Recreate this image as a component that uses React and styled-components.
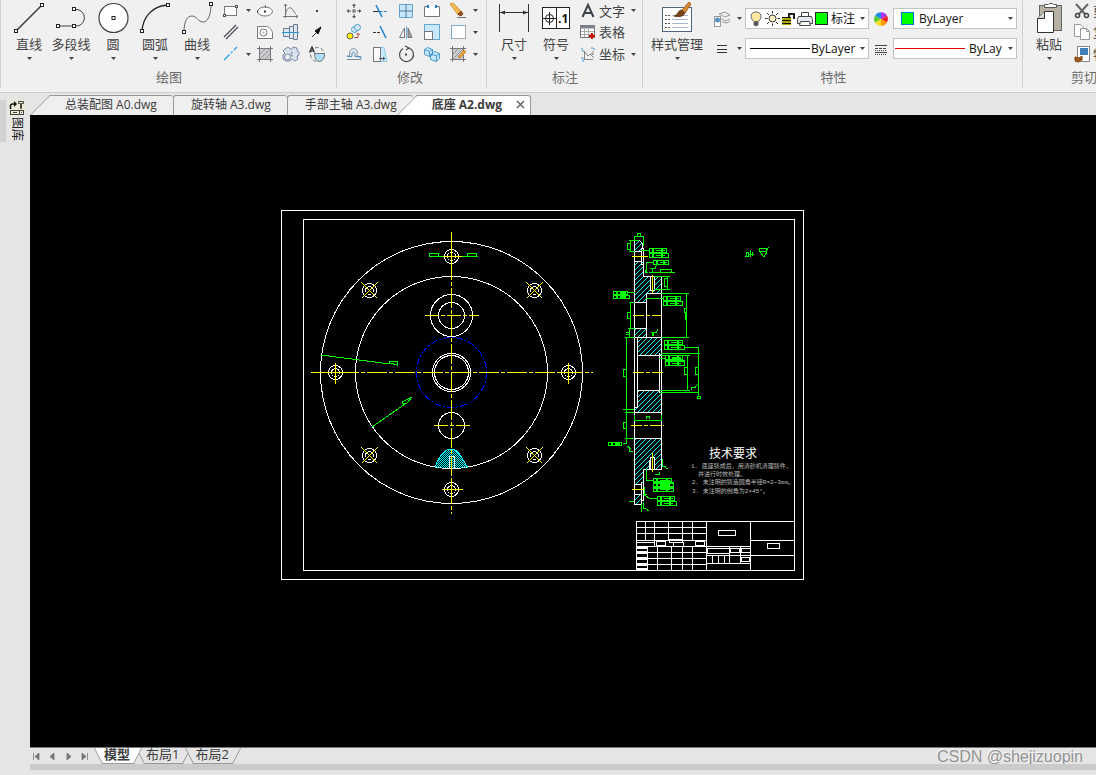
import React, { useState } from 'react';
import styled, { createGlobalStyle, css } from 'styled-components';

const GlobalStyle = createGlobalStyle`
  *,
  *::before,
  *::after {
    box-sizing: border-box;
  }

  body {
    margin: 0;
    overflow: hidden;
    font-family: 'Open Sans', 'Noto Sans CJK SC', sans-serif;
    font-size: 13px;
    color: #444;
  }

  button,
  select {
    font: inherit;
    color: inherit;
    margin: 0;
    padding: 0;
    border: none;
    background: none;
  }

  svg {
    display: block;
    flex: none;
  }
`;

const Window = styled.div`
  display: flex;
  flex-direction: column;
  height: 100vh;
  background-color: #e5e5e5;
`;

const Ribbon = styled.header`
  display: flex;
  flex: none;
  overflow: hidden;
  background-color: #f0f0f0;
  border-bottom: 1px solid #cdcdcd;
  padding-bottom: 4px;
`;

const Group = styled.section`
  display: flex;
  flex: none;
  flex-direction: column;
  border-left: 1px solid #d0d0d0;
  padding: ${({ $padding }) => $padding};
`;

const GroupBody = styled.div`
  display: flex;
  height: 69px;
`;

const GroupTitle = styled.h2`
  margin: 0;
  padding-bottom: 2px;
  font-size: 13px;
  font-weight: normal;
  line-height: 17px;
  text-align: center;
  color: #6c6c6c;
`;

const BigButton = styled.button`
  display: flex;
  flex-direction: column;
  align-items: center;
  width: ${({ $wide }) => ($wide ? 54 : 42)}px;
  padding-top: 1px;
  line-height: 18px;
  white-space: nowrap;
`;

const CaretBox = styled.span`
  display: flex;
  align-items: center;
  justify-content: center;
  width: 8px;
  height: 10px;
`;

const IconGrid = styled.div`
  display: grid;
  grid-template-columns: ${({ $columns }) => $columns};
  grid-template-rows: 21px 22px 22px;
  align-content: start;
`;

const IconButton = styled.button`
  display: flex;
  align-items: center;
  justify-content: center;
`;

const RowList = styled.div`
  display: grid;
  grid-template-rows: 21px 22px 22px;
  align-content: start;
`;

const RowButton = styled.button`
  display: grid;
  grid-template-columns: ${({ $icon }) => $icon}px auto 8px;
  align-items: center;
  line-height: 18px;
  white-space: nowrap;
  text-align: left;

  svg {
    justify-self: center;
  }
`;

const RowLabel = styled.span`
  padding-right: ${({ $gap }) => $gap}px;
`;

const Properties = styled.div`
  display: grid;
  grid-template-columns: 32px 124px 24px 124px;
  grid-template-rows: 21px 21px;
  row-gap: 9px;
  align-content: start;
  padding: 8px 0 0 9px;
`;

const MenuButton = styled.button`
  display: flex;
  align-items: center;
  gap: 4px;
`;

const Combo = styled.div`
  display: flex;
  align-items: center;
  gap: ${({ $gap }) => $gap}px;
  padding: 0 2px 0 ${({ $left }) => $left}px;
  border: 1px solid #c3c3c3;
  background-color: #fff;
`;

const ComboSelect = styled.select`
  appearance: none;
  flex: 1;
  min-width: 0;
  height: 19px;
  outline: none;
  font-size: 12px;
  line-height: 19px;
  color: #111;
`;

const Swatch = styled.span`
  flex: none;
  width: 13px;
  height: 13px;
  border: 1px solid ${({ $edge }) => $edge};
  background-color: #0f0;
`;

const LineSample = styled.span`
  flex: none;
  width: ${({ $width }) => $width}px;
  height: 1px;
  background-color: ${({ $color }) => $color};
`;

const LayerIcons = styled.span`
  display: flex;
  flex: none;
  align-items: center;
  gap: 2px;
`;

const Workspace = styled.div`
  display: flex;
  flex: 1;
  min-height: 0;
`;

const Sidebar = styled.aside`
  display: flex;
  flex: none;
  width: 30px;
  padding-top: 7px;
  align-items: flex-start;
`;

const LibraryTab = styled.button`
  display: flex;
  flex-direction: column;
  align-items: center;
  gap: 1px;
  width: 25px;
  height: 42px;
  border-left: 6px solid #d2d2d2;
  padding-left: 3px;
`;

const LibraryLabel = styled.span`
  writing-mode: vertical-rl;
  text-orientation: sideways;
  font-size: 12px;
  line-height: 14px;
  color: #222;
`;

const Main = styled.main`
  display: flex;
  flex: 1;
  min-width: 0;
  flex-direction: column;
`;

const FileTabs = styled.nav`
  display: flex;
  flex: none;
  align-items: flex-end;
  height: 22px;
`;

const slanted = css`
  padding-left: 35px;
  border-color: transparent;
  border-left: none;
  background: none;

  &::before {
    content: '';
    position: absolute;
    z-index: -1;
    left: 10px;
    top: -1px;
    width: 40px;
    height: 20px;
    border-left: 1px solid #999;
    border-top: 1px solid #999;
    background-color: ${({ $active }) => ($active ? '#fff' : '#efefef')};
    transform: skewX(-45deg);
  }

  &::after {
    content: '';
    position: absolute;
    z-index: -1;
    inset: -1px 0 0 30px;
    border-top: 1px solid #999;
    border-right: ${({ $active }) => ($active ? '1px solid #999' : 'none')};
    background-color: ${({ $active }) => ($active ? '#fff' : '#efefef')};
    border-top-right-radius: 3px;
  }
`;

const FileTab = styled.button`
  position: relative;
  z-index: 0;
  height: 20px;
  padding: 0 16px 2px 17px;
  line-height: 17px;
  white-space: nowrap;
  font-size: 12px;
  color: #3c3c3c;
  border-top: 1px solid #999;
  border-left: 1px solid #999;
  border-top-left-radius: 3px;
  border-top-right-radius: 3px;
  background-color: #efefef;

  ${({ $slanted }) => $slanted && slanted}

  ${({ $active }) =>
    $active &&
    css`
      display: flex;
      align-items: center;
      gap: 14px;
      margin-left: -16px;
      padding-right: 6px;
      font-weight: bold;
    `}
`;

const Canvas = styled.div`
  flex: 1;
  min-height: 0;
  background-color: #000;

  svg {
    width: 100%;
    height: 100%;
  }
`;

const LayoutBar = styled.footer`
  display: flex;
  flex: none;
  height: 17px;
  border-top: 1px solid #777;
  padding-right: 13px;
`;

const Pager = styled.div`
  display: flex;
  width: 66px;
`;

const PagerButton = styled.button`
  display: flex;
  align-items: center;
  width: 16px;
  height: 16px;
  padding-left: 2px;
`;

const LayoutTab = styled.button`
  position: relative;
  z-index: ${({ $active }) => ($active ? 1 : 0)};
  height: 16px;
  padding: 0 8px 3px;
  line-height: 13px;
  white-space: nowrap;
  color: #3c3c3c;
  font-weight: ${({ $active }) => ($active ? 'bold' : 'normal')};

  &::before,
  &::after {
    content: '';
    position: absolute;
    z-index: -1;
    top: 0;
    bottom: 0;
    width: 51%;
    border-bottom: 1px solid #999;
    background-color: ${({ $active }) => ($active ? '#fff' : '#e5e5e5')};
  }

  &::before {
    left: 2px;
    border-left: 1px solid #999;
    transform: skewX(27deg);
  }

  &::after {
    right: 0;
    border-right: 1px solid #999;
    transform: skewX(-27deg);
  }
`;

const Watermark = styled.span`
  margin-left: auto;
  font-family: 'Liberation Sans', Arial, sans-serif;
  font-size: 16px;
  line-height: 17px;
  white-space: nowrap;
  color: #929292;
  text-shadow: -1px -1px 0 #f6f6f6;
`;

const ScrollTrack = styled.div`
  flex: none;
  height: 6px;
  margin-bottom: 5px;
  background-color: #cbcbcb;
`;

const Caret = () => (
  <CaretBox>
    <svg width="5" height="3" viewBox="0 0 5 3">
      <path d="M0 0h5L2.5 3z" fill="#444" />
    </svg>
  </CaretBox>
);

const Node = ({ x, y }) => (
  <rect x={x - 1.5} y={y - 1.5} width="3" height="3" fill="#fff" stroke="#222" />
);

const BigIcon = ({ children }) => (
  <svg width="34" height="34" viewBox="0 0 34 34" fill="none" stroke="#3d4048">
    {children}
  </svg>
);

const Icon = ({ children }) => (
  <svg width="18" height="18" viewBox="0 0 18 18" fill="none" stroke="#777">
    {children}
  </svg>
);

const drawTools = [
  {
    label: '直线',
    icon: (
      <>
        <path d="M4 30L30 4" strokeWidth="1.6" />
        <Node x={4} y={30} />
        <Node x={30} y={4} />
      </>
    ),
  },
  {
    label: '多段线',
    icon: (
      <>
        <path d="M20 8.5h3a8.3 8.3 0 0 1 0 16.5H4" />
        <Node x={20} y={8} />
        <Node x={4} y={25} />
        <Node x={20} y={25} />
      </>
    ),
  },
  {
    label: '圆',
    icon: (
      <>
        <circle cx="17.5" cy="17" r="14.5" fill="#fff" strokeWidth="1.2" />
        <Node x={17.5} y={17} />
      </>
    ),
  },
  {
    label: '圆弧',
    icon: (
      <>
        <path d="M4 30C5 16 14 5 30 4" stroke="#222" strokeWidth="1.3" />
        <Node x={4} y={30} />
        <Node x={30} y={4} />
      </>
    ),
  },
  {
    label: '曲线',
    icon: (
      <>
        <path d="M4 31C4 20 7 15 12 15S18 21 23 21 31 14 31 3" stroke="#666" />
        <Node x={4} y={31} />
        <Node x={31} y={3} />
      </>
    ),
  },
];

const drawIcons = [
  {
    name: '矩形',
    menu: true,
    icon: (
      <>
        <rect x="2.5" y="4.5" width="12" height="9" fill="#fff" />
        <rect x="1.5" y="12.5" width="2" height="2" fill="#fff" stroke="#555" />
        <rect x="13.5" y="3.5" width="2" height="2" fill="#fff" stroke="#555" />
      </>
    ),
  },
  {
    name: '椭圆',
    icon: (
      <>
        <ellipse cx="9" cy="9.5" rx="7.5" ry="4.5" fill="#fff" />
        <path d="M8 9.5h2M1 9.5h1M9 4.5h1" stroke="#333" strokeWidth="2" />
      </>
    ),
  },
  {
    name: '公式曲线',
    icon: (
      <>
        <path d="M3.5 2v14M1 14.5h15M2 4l1.5-2L5 4M14 13l2 1.5-2 1.5" />
        <path d="M3.5 13C4 7 7 5 9 6s3 5 5 6" />
      </>
    ),
  },
  { name: '点', icon: <rect x="8" y="8" width="2" height="2" fill="#444" stroke="none" /> },
  {
    name: '双线',
    spacer: true,
    icon: <path d="M2 14L14 2M4 16L16 4" stroke="#4b4e55" strokeWidth="1.3" />,
  },
  {
    name: '局部视图',
    icon: (
      <>
        <path d="M1.5 3.5h9c3 0 5 3 6 6v6h-15z" fill="#fff" />
        <circle cx="7.5" cy="9.5" r="3.5" />
        <circle cx="7.5" cy="9.5" r="1" fill="#aab" stroke="none" />
      </>
    ),
  },
  {
    name: '轴',
    icon: (
      <>
        <path d="M1.5 5.5h6v8h-6zM7.5 3.5h4v12h-4zM11.5 1.5h4v15h-4z" fill="#dce6f0" stroke="#6b7b91" />
        <path d="M0 9.5h17" stroke="#2a95d5" />
      </>
    ),
  },
  {
    name: '箭头',
    icon: (
      <>
        <path d="M4 14l5-5" stroke="#333" />
        <path d="M13 4l-3 7-3-3z" fill="#111" stroke="#111" />
      </>
    ),
  },
  {
    name: '中心线',
    menu: true,
    icon: <path d="M2 15L15 2" stroke="#1ea0e6" strokeWidth="1.3" strokeDasharray="8 2 2 2" />,
  },
  {
    name: '填充',
    icon: (
      <>
        <rect x="3.5" y="3.5" width="11" height="11" fill="#c7cbcf" />
        <path d="M4 9l5-5M4 14L14 4M9 14l5-5" stroke="#999" />
        <path d="M1 3.5h16M1 14.5h16M3.5 1v16M14.5 1v16" />
      </>
    ),
  },
  {
    name: '齿轮',
    icon: (
      <>
        <path
          d="M3 4l3-2 2 2h2l1-2 4 1v3l2 1v3l-2 1 1 3-3 2-3-2-2 2H4l-3-2v-4l2-2-2-2z"
          fill="#d9e1ec"
          stroke="#7a89a0"
        />
        <circle cx="5.5" cy="12" r="3" fill="#f0f0f0" stroke="#7a89a0" />
        <path d="M11 7a2 2 0 0 0 0 4" stroke="#7a89a0" />
      </>
    ),
  },
  {
    name: '局部放大',
    icon: (
      <>
        <circle cx="9.5" cy="9.5" r="7" strokeDasharray="4 2" />
        <path d="M6.5 8.5h10q0 7-5 8-5-1-5-8z" fill="#aee0fb" />
        <path d="M1.5 7.5L4 2l2.5 5.5M3 6h2" stroke="#222" strokeWidth="1.2" />
      </>
    ),
  },
];

const modifyIcons = [
  {
    name: '移动',
    icon: (
      <>
        <path d="M9 3v3M9 12v3M3 9h3M12 9h3" stroke="#555" />
        <path d="M7 4l2-2.5L11 4zM7 14l2 2.5 2-2.5zM4 7L1.5 9 4 11zM14 7l2.5 2-2.5 2z" fill="#555" stroke="none" />
        <rect x="8" y="8" width="2" height="2" fill="#fff" stroke="#555" />
      </>
    ),
  },
  {
    name: '裁剪',
    icon: (
      <>
        <path d="M2 9.5h6" stroke="#333" />
        <path d="M9 9.5h8" stroke="#1e90dc" strokeDasharray="3 1" />
        <path d="M5 3l6 12" stroke="#1e7fd0" strokeWidth="1.5" />
      </>
    ),
  },
  {
    name: '阵列',
    icon: (
      <>
        <path d="M2.5 2.5h13v13h-13z" fill="#c5e8fc" stroke="#6aa5cd" />
        <path d="M9 2v14M2 9h14" stroke="#51789a" />
      </>
    ),
  },
  {
    name: '打断',
    icon: (
      <>
        <path d="M4 4.5H1.5v10h15v-10H14" fill="#fff" />
        <path d="M5 3v3M13 3v3" stroke="#1e7fd0" strokeWidth="2" />
      </>
    ),
  },
  {
    name: '删除',
    menu: true,
    icon: (
      <>
        <path d="M8 15.5h9" />
        <path d="M1 2l3-1 8 8-3 4z" fill="#f2bb55" stroke="#d09a40" />
        <path d="M9 12l3-3 2 3-2 2-2-1z" fill="#9c5522" stroke="#804418" />
      </>
    ),
  },
  {
    name: '复制',
    icon: (
      <>
        <circle cx="5" cy="13" r="3" fill="#ffee00" stroke="#665" />
        <circle cx="9.5" cy="6.5" r="3" fill="#d4ecfa" stroke="#4b9acb" />
        <circle cx="12.5" cy="4.5" r="3" fill="#d4ecfa" stroke="#4b9acb" />
        <path d="M9 14.5h4v-4M11.5 12L13 10l2 2" stroke="#b55" />
      </>
    ),
  },
  {
    name: '延伸',
    icon: (
      <>
        <path d="M2 9.5h8" stroke="#333" strokeDasharray="3 1" />
        <path d="M9 3l6 12" stroke="#1e7fd0" strokeWidth="1.5" />
      </>
    ),
  },
  {
    name: '镜像',
    icon: (
      <>
        <path d="M7.5 5v9.5h-5z" fill="#fff" />
        <path d="M11 5v9.5h4z" fill="#9aa1a8" />
        <path d="M9.5 3v13" stroke="#6ab4e6" />
      </>
    ),
  },
  {
    name: '缩放',
    icon: (
      <>
        <rect x="1.5" y="1.5" width="15" height="15" fill="#c5e8fc" stroke="#6aa5cd" />
        <rect x="1.5" y="8.5" width="8" height="8" fill="#fff" />
      </>
    ),
  },
  {
    name: '拉伸框',
    menu: true,
    icon: (
      <>
        <rect x="2.5" y="2.5" width="14" height="13" fill="#fff" stroke="#aaa" />
        <path d="M2.5 16V2.5H17" stroke="#5fb0e6" strokeDasharray="2 1" />
      </>
    ),
  },
  {
    name: '偏移',
    icon: (
      <>
        <path d="M2 14.5h14V12h-3c-2 0 0-3-1-6s-6-3-7 0 1 4-1 5H2" stroke="#7a8a9e" />
        <path d="M2 11.5h5V9c0-3 3-3 3 0v2.5h6" stroke="#4f8ec1" />
      </>
    ),
  },
  {
    name: '拉伸',
    icon: (
      <>
        <path d="M9 2.5h4l3 14H9z" fill="#c5e8fc" stroke="#8fcbea" />
        <rect x="2.5" y="2.5" width="7" height="14" fill="#fafafa" />
        <path d="M8 13.5h6M12 12l2 1.5-2 1.5" stroke="#555" />
      </>
    ),
  },
  {
    name: '旋转',
    icon: (
      <>
        <path d="M6 3.5a7 7 0 1 0 6-.5M8 1l4 2-3 2" stroke="#444" strokeWidth="1.2" />
        <rect x="8" y="8.5" width="2" height="2" fill="#444" stroke="none" />
      </>
    ),
  },
  {
    name: '块',
    icon: (
      <path
        d="M1.5 4.5l3-2 5 2v5l-3 2-5-2zM1.5 4.5l5 2v5M6.5 6.5l3-2M7.5 9.5l4-3 5 2v5l-3 3-6-2zM7.5 9.5l6 1v6M13.5 10.5l3-2"
        fill="#c5e8fc"
        stroke="#4b9acb"
      />
    ),
  },
  {
    name: '填充编辑',
    menu: true,
    icon: (
      <>
        <rect x="3.5" y="3.5" width="11" height="11" fill="#c7cbcf" />
        <path d="M4 9l5-5M4 14L14 4" stroke="#999" />
        <path d="M1 3.5h16M1 14.5h16M3.5 1v16M14.5 1v16" />
        <path d="M9 12l6-7 2 2-6 6z" fill="#efa63c" stroke="#b5731b" strokeWidth=".7" />
      </>
    ),
  },
];

const annotationRows = [
  {
    label: '文字',
    menu: true,
    icon: <path d="M3.5 15L9 3l5.5 12M6 11h6" stroke="#3f434b" strokeWidth="2" />,
  },
  {
    label: '表格',
    icon: (
      <>
        <rect x="1.5" y="2.5" width="14" height="12" fill="#fff" />
        <path d="M1 4h15" stroke="#7a838e" strokeWidth="3" />
        <path d="M2 8.5h13M2 11.5h13M5.5 6v8M9.5 6v8" stroke="#aaa" />
        <path d="M13 10v6M10 13h6" stroke="#c00" strokeWidth="2" />
      </>
    ),
  },
  {
    label: '坐标',
    menu: true,
    icon: (
      <>
        <path d="M5.5 6v8.5H14M6 7l3 4 2-2 4 4M12 8l2 2V6" stroke="#888" />
        <path d="M2 4h2v3M2 13h3v3H2M12 3h3v3" stroke="#3b8fd0" strokeDasharray="2 1" />
      </>
    ),
  },
];

const clipboardRows = [
  {
    label: '剪切',
    icon: (
      <>
        <path d="M3 2l9 10M15 2L6 12" stroke="#666" strokeWidth="2" />
        <circle cx="4.5" cy="13.5" r="2" stroke="#444" strokeWidth="1.5" />
        <circle cx="13.5" cy="13.5" r="2" stroke="#444" strokeWidth="1.5" />
      </>
    ),
  },
  {
    label: '复制',
    icon: (
      <>
        <path d="M1.5 1.5h6l3 3v9h-9z" fill="#fff" stroke="#999" />
        <path d="M7.5 5.5h6l3 3v8h-9zM13.5 5.5v3h3" fill="#fff" stroke="#999" />
      </>
    ),
  },
  {
    label: '特性匹配',
    icon: (
      <>
        <rect x="4.5" y="1.5" width="12" height="15" fill="#fff" stroke="#888" />
        <rect x="7" y="3" width="8" height="7" fill="#3f7fb5" stroke="none" />
        <path d="M2 12l4 1 3-2v4l-4 2-3-1z" fill="#a35a1f" stroke="#7d4212" />
      </>
    ),
  },
];

const DimensionIcon = () => (
  <BigIcon>
    <path d="M2.5 3v28M31.5 3v28M3 11.5h28" stroke="#333" />
    <path d="M3 11.5l5-2v4zM31 11.5l-5-2v4z" fill="#333" stroke="none" />
  </BigIcon>
);

const SymbolIcon = () => (
  <BigIcon>
    <rect x="3.5" y="6.5" width="27" height="21" fill="#fff" stroke="#222" />
    <path d="M17.5 6v21M4 17.5h13M10.5 11v13" stroke="#222" />
    <circle cx="10.5" cy="17.5" r="4" stroke="#222" />
    <text x="19" y="22" fontSize="12" fontWeight="bold" fill="#111" stroke="none">
      .1
    </text>
  </BigIcon>
);

const StyleIcon = () => (
  <BigIcon>
    <rect x="2.5" y="6.5" width="29" height="24" fill="#fff" stroke="#4d6684" />
    <path d="M5 14.5h5M5 18.5h5M5 22.5h5M5 26.5h5" stroke="#556" strokeDasharray="2 1" />
    <path d="M12 14.5h16M12 18.5h16M12 22.5h16M12 26.5h16" stroke="#a9b5d2" />
    <path d="M22 9l7-8 2 2-6 9z" fill="#d98a35" stroke="#a5611e" />
    <path d="M14 15c3 0 4-5 7-6l4 3c-2 4-6 4-11 3z" fill="#7b4418" stroke="#5f330f" />
  </BigIcon>
);

const PasteIcon = () => (
  <BigIcon>
    <rect x="7.5" y="4.5" width="22" height="25" fill="#b9b0a4" stroke="#666" />
    <path d="M12.5 6.5v-3h4l1-1h3l1 1h3v3z" fill="#fff" stroke="#555" />
    <path d="M12.5 10.5h9v21h-16v-14z" fill="#fff" stroke="#333" />
    <path d="M12.5 10.5v7h-7" fill="#d8d8d8" stroke="#333" />
  </BigIcon>
);

const LayerStack = () => (
  <Icon>
    <path d="M6 4l6-2 5 3-5 2zM7 8l5 3 5-2M9 12l5 1 3-2" stroke="#999" />
    <rect x="1.5" y="6.5" width="6" height="10" fill="#fff" stroke="#999" />
    <circle cx="4.5" cy="10" r="2.5" fill="#5a91be" stroke="none" />
  </Icon>
);

const LineWeight = () => (
  <Icon>
    <path d="M4 5.5h10M4 9.5h10M4 12.5h10" stroke="#333" />
  </Icon>
);

const BulbIcon = () => (
  <svg width="14" height="16" viewBox="0 0 14 16" stroke="#666">
    <path d="M5 10.5C0 6 2 1 7 1s7 5 2.5 9.5z" fill="#ffe9a0" />
    <path d="M5 11h4v3l-2 1-2-1z" fill="#555" />
  </svg>
);

const SunIcon = () => (
  <svg width="15" height="15" viewBox="0 0 15 15" stroke="#333" fill="none">
    <circle cx="7.5" cy="7.5" r="3.5" fill="#fff3c4" />
    <path d="M7.5 0v2.5M7.5 12.5V15M0 7.5h2.5M12.5 7.5H15M2 2l2 2M11 11l2 2M13 2l-2 2M4 11l-2 2" />
  </svg>
);

const LockIcon = () => (
  <svg width="13" height="14" viewBox="0 0 13 14" fill="none">
    <path d="M7 6V2h5v5" stroke="#222" strokeWidth="2" />
    <rect x="0" y="5" width="9" height="8" fill="#b0a800" />
    <path d="M0 5.5h9M0 8.5h9M0 11.5h9" stroke="#111" />
  </svg>
);

const PrinterIcon = () => (
  <svg width="16" height="15" viewBox="0 0 16 15" stroke="#444">
    <path d="M4.5 5V1.5h7V5" fill="#fff" />
    <path d="M1.5 5.5h13l1 3v4H.5v-4z" fill="#e6ebf3" />
    <path d="M3.5 10.5h9l1 4h-11z" fill="#fff" />
  </svg>
);

const ColorWheel = () => {
  const colors = ['#e22', '#f90', '#fd2', '#5c3', '#28e', '#a3e'];
  return (
    <svg width="16" height="16" viewBox="-7 -7 14 14">
      {colors.map((color, i) => (
        <path key={color} d="M0 0L6 0A6 6 0 0 1 3 5.2Z" fill={color} transform={`rotate(${i * 60 - 30})`} />
      ))}
    </svg>
  );
};

const LineTypeIcon = () => (
  <svg width="16" height="16" viewBox="0 0 16 16" stroke="#444">
    <path d="M2 4.5h12M2 11.5h12" />
    <path d="M2 7.5h12" strokeDasharray="3 1" />
    <path d="M2 9.5h12M2 13.5h12" strokeDasharray="1 1" />
  </svg>
);

// dimension text, drawn as a framed block with one or more rows
const Tag = ({ x, y, w, h, rows = 2 }) => {
  const rowHeight = h / rows;
  return (
    <g fill="#000" stroke="#0f0" strokeWidth="1.5">
      {Array.from({ length: rows }, (_, i) => (
        <g key={i}>
          <rect x={x + 0.5} y={y + 0.5 + i * rowHeight} width={i ? w : w - 2} height={rowHeight - 1} />
          <path
            d={`M${x + 4} ${y + i * rowHeight}v${rowHeight}M${x + 7} ${y + i * rowHeight + rowHeight / 2}h${w - 10}M${x + w - 6} ${y + i * rowHeight}v${rowHeight}`}
          />
        </g>
      ))}
    </g>
  );
};

const Bolt = ({ x, y, diagonal }) => (
  <g>
    <circle cx={x} cy={y} r="7" />
    <circle cx={x} cy={y} r="4" />
    <path
      stroke="#ff0"
      d={
        diagonal
          ? `M${x - 8} ${y - 8}l16 16M${x + 8} ${y - 8}l-16 16`
          : `M${x - 10} ${y}h21M${x} ${y - 10}v21`
      }
    />
  </g>
);

const Drawing = () => (
  <svg viewBox="30 115 1066 632" role="img" aria-label="底座 A2" fill="none" stroke="#fff" shapeRendering="crispEdges">
    <defs>
      <pattern id="hatch" width="5" height="5" patternUnits="userSpaceOnUse">
        <path d="M-1 6L6 -1M-1 1L1 -1M4 6L6 4" stroke="#0ff" />
      </pattern>
      <pattern id="dense" width="2" height="2" patternUnits="userSpaceOnUse">
        <path d="M0 0h1v1H0zM1 1h1v1H1z" fill="#0ff" stroke="none" />
      </pattern>
    </defs>

    {/* sheet border */}
    <rect x="281.5" y="210.5" width="522" height="369" />
    <rect x="303.5" y="219.5" width="491" height="351" />

    {/* front view */}
    <circle cx="451.5" cy="372.5" r="131" />
    <circle cx="451.5" cy="372.5" r="96" />
    <circle cx="451.5" cy="372.5" r="19" />
    <circle cx="451.5" cy="372.5" r="17" />
    <circle cx="451.5" cy="372.5" r="35" stroke="#00f" strokeDasharray="7 2 2 2" />
    <circle cx="451.5" cy="315.5" r="21" />
    <circle cx="451.5" cy="315.5" r="13" />
    <circle cx="451.5" cy="425.5" r="13" />
    <path d="M435 468C437 460 443 449 451 449S462 459 468 468z" fill="url(#dense)" stroke="none" />
    <path d="M435 468C437 460 443 449 451 449S462 459 468 468" stroke="#0ff" />
    <path d="M449.5 469v-13h5v13" />
    <g stroke="#ff0">
      <path d="M311 372.5h282" strokeDasharray="20 2 4 2" />
      <path d="M451.5 232v282" strokeDasharray="20 2 4 2" />
      <path d="M425 315.5h54M434 425.5h36" strokeDasharray="14 2 4 2" />
    </g>
    <Bolt x={451.5} y={256.5} />
    <Bolt x={451.5} y={489.5} />
    <Bolt x={335.5} y={372.5} />
    <Bolt x={568.5} y={372.5} />
    <Bolt x={369.5} y={290.5} diagonal />
    <Bolt x={534.5} y={290.5} diagonal />
    <Bolt x={369.5} y={455.5} diagonal />
    <Bolt x={534.5} y={455.5} diagonal />
    <g stroke="#0f0">
      <path d="M429 256.5h14M462 256.5h16M429.5 256v-2.5h9v3M467.5 256v-2.5h9v3" />
      <path d="M321 355l69 9M389 363l1-2h7v4l-7-2M372 427l33-23M402 402l10-5-5 6-5 1zM408 401l4-4" />
    </g>

    {/* side section */}
    <g fill="url(#hatch)" stroke="none">
      <path d="M635 241h7v10h-7zM635 262h8v14h18v17h-15v9h-11zM635 329h11v8h-11zM638 338h23v17h-23z" />
      <path d="M638 391h23v21h-26v-5h3zM635 439h26v30h-18v15h-8zM635 495h7v9h-7z" />
    </g>
    <path d="M634.5 504.5v-264h5l3 3v5h1v28h18v193h-18v31h-2v4zM634.5 251.5h7M634.5 261.5h7M641.5 248v16h2" />
    <path d="M634.5 302.5h12M634.5 328.5h12M661.5 293.5h-15v44M634.5 337.5h27M637.5 337v70h-3" />
    <path d="M637 355.5h24M637 390.5h24M659.5 353v40M634.5 412.5h27M634.5 438.5h27M634.5 484.5h7M634.5 494.5h7M641.5 482v18" />
    <path d="M650.5 277v13h4v-13M650.5 469v-12h4v12M649.5 460v9" fill="#000" />
    <g stroke="#ff0">
      <path d="M632 256.5h16M632 489.5h12M652.5 275v18M652.5 453v19" />
      <path d="M633 315.5h28M633 372.5h31M631 425.5h33" strokeDasharray="11 2 4 2" />
    </g>

    {/* dimensions */}
    <g stroke="#0f0">
      <path d="M634.5 240v-3.5h9v9M637.5 236v-2.5h3v3M629 240.5h10M629 251.5h6M630.5 240v12M630 243.5h-2.5v6h2.5M641 250.5h8" />
      <path d="M653 262.5h-6.5v10M645.5 270v2h2M649 272.5h26M660.5 272v-2.5h11v3M650 268.5h6M652 269v4M655 268l2-4M654 276.5h16M654 289.5h16M667.5 276v14M667 278.5h-2.5v8h2.5" />
      <path d="M627 292.5h8M629 302.5h6M628 328.5h7M630.5 302v26M630 312.5h-2.5v6h2.5M629.5 328v9M626 332.5h3M626 334.5h3M625 337.5h10" />
      <path d="M626.5 337v106h-4M626 369.5h-2.5v7h2.5M626 422.5h-2.5v6h2.5M623 409.5h11M625 412.5h9M625 438.5h9" />
      <path d="M646 298.5h17M661 293.5h28M661 337.5h28M686.5 293v44M686 308.5h-2v3l1 1v7h1M651 332.5h5l2-3M652 333l1 3 1-3" />
      <path d="M661 353.5h39M661 355.5h29M684 347.5h14.5v48M687.5 355v35M660 390.5h30M660 392.5h39M695.5 374v-7h3v7zM684.5 374v-7h3v7z" />
      <path d="M691.5 390v-3h4l2-3M697 396.5h3v2h-3zM634.5 415v5h27v-5M646.5 419v-3h3v3M627 446l4 3M629 448v3h4M659 358.5h6" />
      <path d="M662.5 459v7h3M663 466l5 3M659 471.5v3h-4M646.5 469v11.5h7M644.5 487v7h2M643 494l6 4h8M643.5 502v6h2M645 508l4 3M629 501.5h5M641.5 504v8" />
      <path d="M746.5 257v-5h2v5M750.5 257v-7M745 256.5h3M748 254.5h6M752.5 252v4M759.5 248.5h7v3h-7zM760 252l4 5 3-5M766 251l3-4" />
    </g>
    <Tag x={649} y={248} w={19} h={10} />
    <Tag x={653} y={260} w={17} h={5} rows={1} />
    <Tag x={613} y={291} w={16} h={8} />
    <Tag x={663} y={296} w={19} h={10} />
    <Tag x={664} y={340} w={20} h={10} />
    <Tag x={665} y={355} w={19} h={11} />
    <Tag x={653} y={478} w={20} h={14} rows={3} />
    <Tag x={657} y={496} w={19} h={10} />
    <Tag x={608} y={442} w={15} h={4} rows={1} />

    {/* title block */}
    <path d="M636.5 570v-48.5h158M636 527.5h70M636 533.5h70M636 540.5h70M636 546.5h70M645.5 521v20M654.5 521v26M668.5 521v20M682.5 521v20M692.5 521v20" />
    <path d="M647.5 546v24M657.5 546v24M671.5 546v24M682.5 546v24M692.5 546v24M647 552.5h59M647 558.5h59M647 564.5h59M706.5 521v49M750.5 521v49" />
    <path d="M637 547.5h10M637 552.5h10M637 558.5h10M637 564.5h10M637 569.5h10" strokeWidth="3" />
    <path d="M656.5 541.5h9v4h-9zM683.5 541.5v5M695.5 541.5h9v4h-9zM669.5 539.5h13v3h-13zM673.5 542v4M637 542.5h17" />
    <path d="M718.5 530.5h17v5h-17zM706 546.5h44M707.5 548.5h22v5h-22zM730.5 548.5h9v4h-9zM741.5 548.5h9v4h-9zM706 555.5h44M706 563.5h44M729.5 546v17M740.5 546v17M712.5 555v8M718.5 555v8M724.5 555v8M741.5 557.5h8v4h-8z" />
    <path d="M750 540.5h44M750 555.5h44M767.5 543.5h12v5h-12z" />

    <g fill="#fff" stroke="none">
      <text x="709" y="458" fontSize="12">
        技术要求
      </text>
      <g fontSize="6" fill="#bbb" fontFamily="'Liberation Mono', 'Noto Sans CJK SC', monospace">
        <text x="691" y="468">1. 底座铸成后，用清砂机清理铸件，</text>
        <text x="698" y="476">并进行时效处理。</text>
        <text x="692" y="484">2. 未注明的铸造圆角半径R=2~3mm。</text>
        <text x="692" y="493">3. 未注明的倒角为2×45°。</text>
      </g>
    </g>
  </svg>
);

const renderGrid = (items) =>
  items.map((item) => (
    <React.Fragment key={item.name}>
      <IconButton aria-label={item.name}>
        <Icon>{item.icon}</Icon>
      </IconButton>
      {item.menu && (
        <IconButton aria-label={`${item.name}选项`}>
          <Caret />
        </IconButton>
      )}
      {item.spacer && <span />}
    </React.Fragment>
  ));

const App = () => {
  const files = ['总装配图 A0.dwg', '旋转轴 A3.dwg', '手部主轴 A3.dwg', '底座 A2.dwg'];
  const layouts = ['模型', '布局1', '布局2'];
  const pager = [
    { name: '第一个', d: 'M1.5 1v7M7 1v7L3 4.5z' },
    { name: '上一个', d: 'M6 1v7L2 4.5z' },
    { name: '下一个', d: 'M3 1v7l4-3.5z' },
    { name: '最后一个', d: 'M2 1v7l4-3.5zM7.5 1v7' },
  ];
  const [layout, setLayout] = useState('模型');

  return (
    <Window>
      <GlobalStyle />
      <Ribbon>
        <Group $padding="0 6px 0 7px">
          <GroupBody>
            {drawTools.map((tool) => (
              <BigButton key={tool.label}>
                <BigIcon>{tool.icon}</BigIcon>
                {tool.label}
                <Caret />
              </BigButton>
            ))}
            <IconGrid $columns="26px 8px 26px 26px 26px">{renderGrid(drawIcons)}</IconGrid>
          </GroupBody>
          <GroupTitle>绘图</GroupTitle>
        </Group>

        <Group $padding="0 7px 0 4px">
          <GroupBody>
            <IconGrid $columns="repeat(5, 26px) 8px">{renderGrid(modifyIcons)}</IconGrid>
          </GroupBody>
          <GroupTitle>修改</GroupTitle>
        </Group>

        <Group $padding="0 5px 0 6px">
          <GroupBody>
            <BigButton>
              <DimensionIcon />
              尺寸
              <Caret />
            </BigButton>
            <BigButton>
              <SymbolIcon />
              符号
              <Caret />
            </BigButton>
            <RowList>
              {annotationRows.map((row) => (
                <RowButton key={row.label} $icon={22}>
                  <Icon>{row.icon}</Icon>
                  <RowLabel $gap={4}>{row.label}</RowLabel>
                  {row.menu && <Caret />}
                </RowButton>
              ))}
            </RowList>
          </GroupBody>
          <GroupTitle>标注</GroupTitle>
        </Group>

        <Group $padding="0 5px 0 7px">
          <GroupBody>
            <BigButton $wide>
              <StyleIcon />
              样式管理
              <Caret />
            </BigButton>
            <Properties>
              <MenuButton aria-label="图层">
                <LayerStack />
                <Caret />
              </MenuButton>
              <Combo $left={3} $gap={3}>
                <LayerIcons>
                  <BulbIcon />
                  <SunIcon />
                  <LockIcon />
                  <PrinterIcon />
                  <Swatch $edge="#222" />
                </LayerIcons>
                <ComboSelect aria-label="图层名称">
                  <option>标注层</option>
                </ComboSelect>
                <Caret />
              </Combo>
              <IconButton aria-label="颜色">
                <ColorWheel />
              </IconButton>
              <Combo $left={7} $gap={5}>
                <Swatch $edge="#0078d7" />
                <ComboSelect aria-label="颜色">
                  <option>ByLayer</option>
                </ComboSelect>
                <Caret />
              </Combo>
              <MenuButton aria-label="线宽">
                <LineWeight />
                <Caret />
              </MenuButton>
              <Combo $left={4} $gap={1}>
                <LineSample $width={60} $color="#000" />
                <ComboSelect aria-label="线宽">
                  <option>ByLayer</option>
                </ComboSelect>
                <Caret />
              </Combo>
              <IconButton aria-label="线型">
                <LineTypeIcon />
              </IconButton>
              <Combo $left={1} $gap={4}>
                <LineSample $width={70} $color="#e00000" />
                <ComboSelect aria-label="线型">
                  <option>ByLayer</option>
                </ComboSelect>
                <Caret />
              </Combo>
            </Properties>
          </GroupBody>
          <GroupTitle>特性</GroupTitle>
        </Group>

        <Group $padding="0 0 0 5px">
          <GroupBody>
            <BigButton>
              <PasteIcon />
              粘贴
              <Caret />
            </BigButton>
            <RowList>
              {clipboardRows.map((row) => (
                <RowButton key={row.label} $icon={23}>
                  <Icon>{row.icon}</Icon>
                  <RowLabel $gap={0}>{row.label}</RowLabel>
                </RowButton>
              ))}
            </RowList>
          </GroupBody>
          <GroupTitle>剪切板</GroupTitle>
        </Group>
      </Ribbon>

      <Workspace>
        <Sidebar>
          <LibraryTab>
            <svg width="16" height="16" viewBox="0 0 16 16" fill="none" stroke="#444">
              <rect x="0" y="0" width="16" height="16" fill="#e9e9d4" stroke="none" />
              <path d="M1.5 9V6q0-2 2-2H6" stroke="#111" strokeWidth="1.5" />
              <path d="M5 1l3 3-3 3z" fill="#111" stroke="none" />
              <path d="M9.5 1.5h5v2h-2v5h-1v-5h-2z" />
              <rect x="1.5" y="10.5" width="13" height="4" />
              <path d="M4 12.5h4M10.5 11v3M12 12.5h1" />
            </svg>
            <LibraryLabel>图库</LibraryLabel>
          </LibraryTab>
        </Sidebar>

        <Main>
          <FileTabs>
            {files.map((file, i) => {
              const active = i === files.length - 1;
              return (
                <FileTab key={file} $slanted={i === 0 || active} $active={active}>
                  {file}
                  {active && (
                    <svg width="9" height="9" viewBox="0 0 9 9" stroke="#666" strokeWidth="1.5">
                      <path d="M1 1l7 7M8 1L1 8" />
                    </svg>
                  )}
                </FileTab>
              );
            })}
          </FileTabs>

          <Canvas>
            <Drawing />
          </Canvas>

          <LayoutBar>
            <Pager>
              {pager.map((item) => (
                <PagerButton key={item.name} aria-label={item.name}>
                  <svg width="9" height="9" viewBox="0 0 9 9" fill="#777" stroke="#777" strokeWidth=".8">
                    <path d={item.d} />
                  </svg>
                </PagerButton>
              ))}
            </Pager>
            {layouts.map((name) => (
              <LayoutTab key={name} $active={name === layout} onClick={() => setLayout(name)}>
                {name}
              </LayoutTab>
            ))}
            <Watermark>CSDN @shejizuopin</Watermark>
          </LayoutBar>
          <ScrollTrack />
        </Main>
      </Workspace>
    </Window>
  );
};

export default App;
